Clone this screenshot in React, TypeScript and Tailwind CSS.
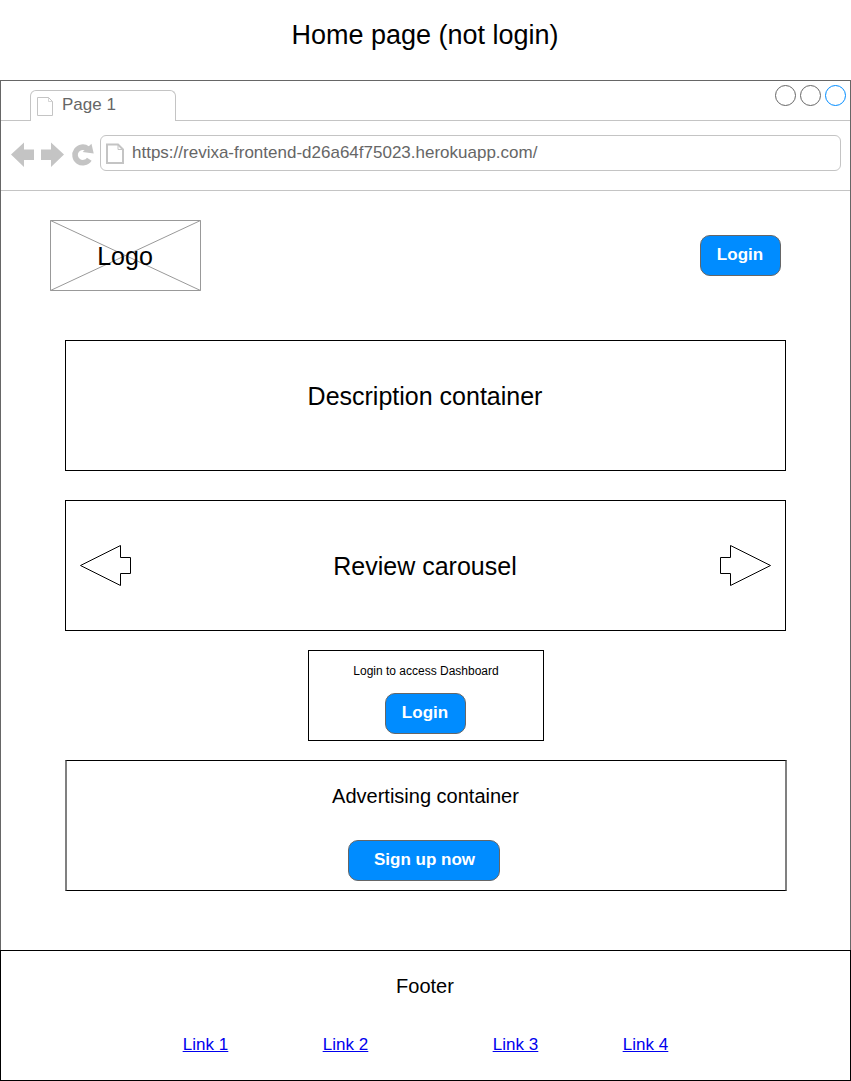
function PageIcon({ bold = false }: { bold?: boolean }) {
  return bold ? (
    <svg width="20" height="22" viewBox="0 0 20 22" fill="none" stroke="#c4c4c4">
      <path d="M2 1.5H13L18 6.5V20H2Z" strokeWidth="2" />
      <path d="M13 2V6.5H18" strokeWidth="1" />
    </svg>
  ) : (
    <svg width="17" height="20" viewBox="0 0 17 20" fill="none" stroke="#c4c4c4">
      <path d="M.5.5H11.5L15.5 4.5V18.5H.5Z" />
      <path d="M11.5.5V4.5H15.5" strokeWidth=".7" />
    </svg>
  );
}

function NavIcons() {
  return (
    <svg className="shrink-0" width="99" height="69" viewBox="1 121 99 69" fill="#c4c4c4">
      <path d="M11 154.5L24 142.5V149.5H34V160H24V167Z" />
      <path d="M64 154.5L51 142.5V149.5H41V160H51V167Z" />
      <path
        d="M89.3 159.3A7.8 7.8 0 1 1 87.5 148.7"
        fill="none"
        stroke="#c4c4c4"
        strokeWidth="5.6"
      />
      <path d="M91.5 143.8L93.7 153.6L82.6 152Z" />
    </svg>
  );
}

function Button({ label, className }: { label: string; className: string }) {
  return (
    <button
      className={`h-[41px] shrink-0 rounded-[10px] border border-[#666666] bg-[#008cff] pb-px text-[17px] leading-5 font-bold text-white ${className}`}
    >
      {label}
    </button>
  );
}

function CarouselArrow({ flip = false }: { flip?: boolean }) {
  return (
    <svg
      className={flip ? "-scale-x-100" : ""}
      width="51"
      height="41"
      viewBox="0 0 51 41"
      fill="white"
      stroke="black"
    >
      <path d="M.5 20.5L40.5.5V12.5H50.5V28.5H40.5V40.5Z" />
    </svg>
  );
}

function BrowserChrome() {
  return (
    <header>
      <div className="flex h-10">
        <div className="w-[29px] border-b border-[#c4c4c4]" />
        <div className="mt-[9px] flex w-[146px] rounded-t-[6px] border border-b-0 border-[#c4c4c4] pl-[6px]">
          <div className="mt-[6px]">
            <PageIcon />
          </div>
          <span className="mt-1 ml-2 text-[17px] leading-5 text-[#666666]">Page 1</span>
        </div>
        <div className="flex flex-1 justify-end gap-1 border-b border-[#c4c4c4] pt-1 pr-1">
          <div className="size-[21px] rounded-full border border-[#666666]" />
          <div className="size-[21px] rounded-full border border-[#666666]" />
          <div className="size-[21px] rounded-full border border-[#008cff]" />
        </div>
      </div>
      <div className="flex h-[70px] border-b border-[#c4c4c4]">
        <NavIcons />
        <div className="mt-[14px] flex h-9 w-[741px] rounded-[6px] border border-[#c4c4c4] pt-[7px] pl-1">
          <PageIcon bold />
          <span className="ml-[7px] text-[17px] leading-5 text-[#666666]">
            https://revixa-frontend-d26a64f75023.herokuapp.com/
          </span>
        </div>
      </div>
    </header>
  );
}

export default function App() {
  return (
    <div className="flex h-[1081px] w-[851px] flex-col bg-white font-['Liberation_Sans',Arial,sans-serif] text-black">
      <h1 className="h-20 pt-5 pr-px text-center text-[27px] leading-[31px]">Home page (not login)</h1>
      <div className="flex h-[870px] flex-col border border-b-0 border-[#666666]">
        <BrowserChrome />
        <div className="mt-[29px] flex h-[71px] items-start justify-between pr-[69px] pl-[49px]">
          <div className="grid h-[71px] w-[151px]">
            <svg className="col-start-1 row-start-1" width="151" height="71" fill="none" stroke="#999999">
              <path d="M.5.5H150.5V70.5H.5ZL150.5 70.5M.5 70.5L150.5.5" />
            </svg>
            <span className="col-start-1 row-start-1 mt-[22px] pr-px text-center text-[25px] leading-7">Logo</span>
          </div>
          <Button label="Login" className="mt-[15px] w-[81px] pr-px" />
        </div>
        <main className="flex flex-col pl-16">
          <section className="mt-[49px] h-[131px] w-[721px] border border-black pt-[41px] pr-px text-center text-[25px] leading-7">
            Description container
          </section>
          <section className="mt-[29px] flex h-[131px] w-[721px] items-start justify-between border border-black px-[14px] pt-11">
            <CarouselArrow />
            <span className="mt-[7px] pr-px text-[25px] leading-7">Review carousel</span>
            <CarouselArrow flip />
          </section>
          <section className="mt-[19px] ml-[243px] flex h-[91px] w-[236px] flex-col border border-black">
            <p className="mt-[13px] h-[29px] text-center text-[12px] leading-[14px]">Login to access Dashboard</p>
            <Button label="Login" className="ml-[76px] w-[81px] pr-px" />
          </section>
          <section className="mt-[19px] h-[131px] w-[722px] border-x-2 border-y border-x-[#808080] border-y-black">
            <h2 className="mt-6 h-[55px] pr-px text-center text-[20px] leading-[23px]">Advertising container</h2>
            <Button label="Sign up now" className="ml-[281px] w-[152px] pl-px" />
          </section>
        </main>
      </div>
      <footer className="h-[131px] border border-black">
        <h2 className="pt-6 pr-px text-center text-[20px] leading-[23px]">Footer</h2>
        <nav className="mt-[37px] flex pl-[181.8px] text-[17px] leading-5 text-[#0000ee] underline">
          <a href="#link-1" className="w-[140px]">Link 1</a>
          <a href="#link-2" className="w-[170px]">Link 2</a>
          <a href="#link-3" className="w-[130px]">Link 3</a>
          <a href="#link-4">Link 4</a>
        </nav>
      </footer>
    </div>
  );
}
